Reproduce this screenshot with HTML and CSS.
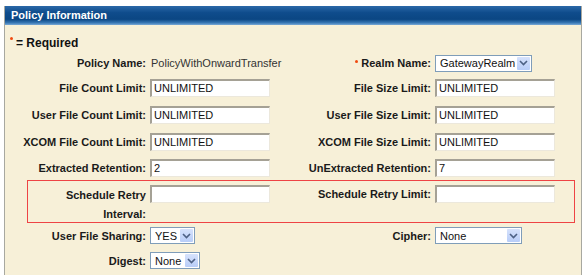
FILE: index.html
```html
<!DOCTYPE html>
<html lang="en">
<head>
    <meta charset="UTF-8">
    <meta name="viewport" content="width=device-width, initial-scale=1.0">
    <title>Policy Information</title>
    <link rel="stylesheet" href="styles.css">
</head>
<body>
    <div class="panel">
        <div class="panel-header">Policy Information</div>
        <div class="panel-body">
            <div class="required"><span class="req"></span>= Required</div>

            <div class="row row-policy">
                <label class="label">Policy Name:</label>
                <span class="value">PolicyWithOnwardTransfer</span>
                <label class="label"><span class="req"></span>Realm Name:</label>
                <span class="select select-realm">
                    <select><option>GatewayRealm</option></select>
                    <span class="arrow"><svg width="9" height="6" viewBox="0 0 9 6"><path d="M1 1 L4.5 4.5 L8 1" fill="none" stroke="#4d6185" stroke-width="1.6"/></svg></span>
                </span>
            </div>

            <div class="row">
                <label class="label">File Count Limit:</label>
                <input type="text" class="field" value="UNLIMITED">
                <label class="label">File Size Limit:</label>
                <input type="text" class="field" value="UNLIMITED">
            </div>

            <div class="row">
                <label class="label">User File Count Limit:</label>
                <input type="text" class="field" value="UNLIMITED">
                <label class="label">User File Size Limit:</label>
                <input type="text" class="field" value="UNLIMITED">
            </div>

            <div class="row">
                <label class="label">XCOM File Count Limit:</label>
                <input type="text" class="field" value="UNLIMITED">
                <label class="label">XCOM File Size Limit:</label>
                <input type="text" class="field" value="UNLIMITED">
            </div>

            <div class="row row-short">
                <label class="label">Extracted Retention:</label>
                <input type="text" class="field" value="2">
                <label class="label">UnExtracted Retention:</label>
                <input type="text" class="field" value="7">
            </div>

            <div class="retry-box">
                <label class="label label-wrap">Schedule Retry Interval:</label>
                <input type="text" class="field" value="">
                <label class="label">Schedule Retry Limit:</label>
                <input type="text" class="field" value="">
            </div>

            <div class="row row-short">
                <label class="label">User File Sharing:</label>
                <span class="select select-sharing">
                    <select><option>YES</option></select>
                    <span class="arrow"><svg width="9" height="6" viewBox="0 0 9 6"><path d="M1 1 L4.5 4.5 L8 1" fill="none" stroke="#4d6185" stroke-width="1.6"/></svg></span>
                </span>
                <label class="label">Cipher:</label>
                <span class="select select-cipher">
                    <select><option>None</option></select>
                    <span class="arrow"><svg width="9" height="6" viewBox="0 0 9 6"><path d="M1 1 L4.5 4.5 L8 1" fill="none" stroke="#4d6185" stroke-width="1.6"/></svg></span>
                </span>
            </div>

            <div class="row row-short">
                <label class="label">Digest:</label>
                <span class="select select-digest">
                    <select><option>None</option></select>
                    <span class="arrow"><svg width="9" height="6" viewBox="0 0 9 6"><path d="M1 1 L4.5 4.5 L8 1" fill="none" stroke="#4d6185" stroke-width="1.6"/></svg></span>
                </span>
            </div>
        </div>
    </div>
</body>
</html>
```

FILE: styles.css
```css
body {
    margin: 0;
    padding: 6px 0 0 4px;
    background-color: white;
    font-family: "Liberation Sans", Arial, sans-serif;
    font-size: 11px;
    color: #222;
}
.panel {
    width: 576px;
    height: 269px;
    background-color: #f7f0d8;
    border-left: 1px solid #a8a8a0;
    border-right: 1px solid #a8a8a0;
}
.panel-header {
    height: 19px;
    line-height: 18px;
    padding-left: 6px;
    color: white;
    font-weight: bold;
    font-size: 11px;
    background: linear-gradient(#2b68a8, #0f4c8c 35%, #0b4683 70%, #3676b3 88%, #79a9d6);
}
.panel-body {
    padding-top: 9px;
}
.required {
    height: 18px;
    line-height: 18px;
    padding-left: 5px;
    font-weight: bold;
    font-size: 12px;
    color: #111;
}
.req {
    display: inline-block;
    width: 3px;
    height: 3px;
    border-radius: 50%;
    background-color: #f04a10;
    vertical-align: top;
    margin: 3px 3px 0 0;
}
.row,
.retry-box {
    display: grid;
    grid-template-columns: 145px 135px 150px 1fr;
    align-items: center;
}
.row {
    height: 27px;
}
.row-policy {
    height: 22px;
}
.row-short {
    height: 25px;
}
.label {
    text-align: right;
    font-weight: bold;
    padding-right: 4px;
    color: #1a1a1a;
    white-space: nowrap;
}
.value {
    color: #333;
    padding-left: 1px;
    white-space: nowrap;
}
.field {
    box-sizing: border-box;
    width: 120px;
    height: 18px;
    margin: 0;
    padding: 0 2px;
    font-family: "Liberation Sans", Arial, sans-serif;
    font-size: 11px;
    color: #111;
    background-color: white;
    border: 1px solid #ece8dc;
    border-top: 2px solid #a5a195;
    border-left: 2px solid #a5a195;
}
.retry-box {
    box-sizing: border-box;
    height: 43px;
    margin-left: 22px;
    width: 548px;
    border: 1px solid #ee4444;
    grid-template-columns: 122px 135px 150px 1fr;
    align-items: start;
    padding-top: 4px;
}
.retry-box .label {
    line-height: 19px;
}
.label-wrap {
    white-space: normal;
    margin-top: 1px;
    padding-left: 20px;
}
.select {
    position: relative;
    display: inline-block;
    box-sizing: border-box;
    height: 17px;
    border: 1px solid #7f9db9;
    background-color: white;
}
.select select {
    appearance: none;
    -webkit-appearance: none;
    border: none;
    outline: none;
    background: transparent;
    width: 100%;
    height: 15px;
    padding: 0 16px 0 4px;
    margin: 0;
    font-family: "Liberation Sans", Arial, sans-serif;
    font-size: 11px;
    color: #111;
}
.arrow {
    position: absolute;
    top: 1px;
    right: 1px;
    width: 13px;
    height: 13px;
    display: flex;
    align-items: center;
    justify-content: center;
    background: linear-gradient(#d6e2fc, #b8cdf8);
    border-radius: 1px;
}
.select-realm {
    width: 97px;
}
.select-sharing {
    width: 45px;
}
.select-cipher {
    width: 87px;
}
.select-digest {
    width: 50px;
}
```
